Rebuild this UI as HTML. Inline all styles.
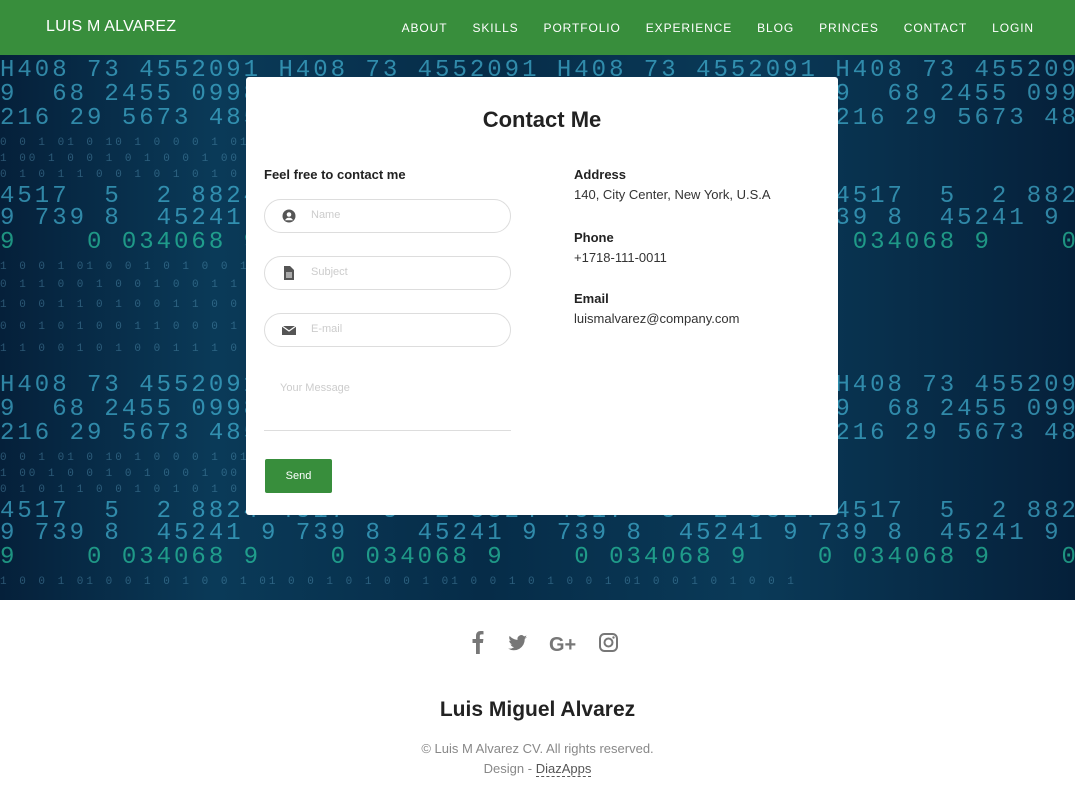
<!DOCTYPE html>
<html><head><meta charset="utf-8"><style>
*{margin:0;padding:0;box-sizing:border-box}
body{width:1075px;height:789px;overflow:hidden;font-family:"Liberation Sans",sans-serif;background:#fff;position:relative}
nav{position:absolute;top:0;left:0;width:1075px;height:55px;background:#388e3c;color:#fff}
nav .brand{position:absolute;left:46px;top:18px;font-size:16px;letter-spacing:.2px}
nav ul{position:absolute;right:41px;top:21px;list-style:none;display:flex;gap:25px;font-size:12px;letter-spacing:.9px}
.hero{position:absolute;top:55px;left:0;width:1075px;height:545px;overflow:hidden;background:linear-gradient(90deg,#05203a,#0a3a58 20%,#062c48 45%,#0a3a58 70%,#05203a);}
.tile{position:absolute;left:0;width:1075px;height:315px;font-family:"Liberation Mono",monospace;white-space:pre;color:#4cc8ea;}
.tile div{position:absolute;left:0}
.big{font-size:24px;opacity:.6;letter-spacing:3px}
.sm{font-size:11px;opacity:.35;color:#6fb6d8;letter-spacing:3px}
.g{color:#2fe0b0}
.card{position:absolute;left:246px;top:77px;width:592px;height:438px;background:#fff;border-radius:3px}
h1{position:absolute;top:30px;width:100%;text-align:center;font-size:22px;color:#222}
.lbl{position:absolute;left:18px;top:90px;font-size:13px;font-weight:bold;color:#222}
.inp{position:absolute;left:18px;width:247px;height:34px;border:1px solid #ddd;border-radius:17px;font-size:11px;color:#ccc;padding:9px 0 0 46px}
.inp svg{position:absolute;left:17px;top:9px}
.msg{position:absolute;left:18px;top:292px;width:247px;height:62px;border-bottom:1px solid #ddd;font-size:11px;color:#ccc;padding:13px 0 0 16px}
.btn{position:absolute;left:19px;top:382px;width:67px;height:34px;background:#388e3c;color:#fff;font-size:11px;text-align:center;line-height:34px;border-radius:2px}
.info{position:absolute;left:328px;font-size:13px;color:#333}
.info b{display:block;color:#222;margin-bottom:5px}
.foot{position:absolute;top:600px;width:1075px;text-align:center}
</style></head><body>
<nav><div class="brand">LUIS M ALVAREZ</div>
<ul><li>ABOUT</li><li>SKILLS</li><li>PORTFOLIO</li><li>EXPERIENCE</li><li>BLOG</li><li>PRINCES</li><li>CONTACT</li><li>LOGIN</li></ul></nav>
<div class="hero">
<div class="tile" style="top:0">
<div class="big" style="top:2px">H408 73 4552091 H408 73 4552091 H408 73 4552091 H408 73 4552091 H408 73 4552091</div>
<div class="big" style="top:26px">9  68 2455 0998 9  68 2455 0998 9  68 2455 0998 9  68 2455 0998 9  68 2455 0998</div>
<div class="big" style="top:50px">216 29 5673 485 216 29 5673 485 216 29 5673 485 216 29 5673 485 216 29 5673 485</div>
<div class="sm" style="top:82px">0 0 1 01 0 10 1 0 0 0 1 01 0 10 1 0 0 0 1 01 0 10 1 0 0 0 1 01 0 10 1 0 0 0 1 01 0 10</div>
<div class="sm" style="top:98px">1 00 1 0 0 1 0 1 0 0 1 00 1 0 0 1 0 1 0 0 1 00 1 0 0 1 0 1 0 0 1 00 1 0 0 1 0 1 0 0 1</div>
<div class="sm" style="top:114px">0 1 0 1 1 0 0 1 0 1 0 1 0 1 1 0 0 1 0 1 0 1 0 1 1 0 0 1 0 1 0 1 0 1 1 0 0 1 0 1 0 1 0 1</div>
<div class="big" style="top:128px">4517  5  2 8824 4517  5  2 8824 4517  5  2 8824 4517  5  2 8824 4517  5  2 8824</div>
<div class="big" style="top:150px">9 739 8  45241 9 739 8  45241 9 739 8  45241 9 739 8  45241 9 739 8  45241</div>
<div class="big g" style="top:174px">9    0 034068 9    0 034068 9    0 034068 9    0 034068 9    0 034068 9   </div>
<div class="sm" style="top:206px">1 0 0 1 01 0 0 1 0 1 0 0 1 01 0 0 1 0 1 0 0 1 01 0 0 1 0 1 0 0 1 01 0 0 1 0 1 0 0 1</div>
<div class="sm" style="top:224px">0 1 1 0 0 1 0 0 1 0 0 1 1 0 0 1 0 0 1 0 0 1 1 0 0 1 0 0 1 0 0 1 1 0 0 1 0 0 1 0 0 1 1</div>
<div class="sm" style="top:244px">1 0 0 1 1 0 1 0 0 1 1 0 0 1 1 0 1 0 0 1 1 0 0 1 1 0 1 0 0 1 1 0 0 1 1 0 1 0 0 1 1 0</div>
<div class="sm" style="top:266px">0 0 1 0 1 0 0 1 1 0 0 0 1 0 1 0 0 1 1 0 0 0 1 0 1 0 0 1 1 0 0 0 1 0 1 0 0 1 1 0 0 0 1</div>
<div class="sm" style="top:288px">1 1 0 0 1 0 1 0 0 1 1 1 0 0 1 0 1 0 0 1 1 1 0 0 1 0 1 0 0 1 1 1 0 0 1 0 1 0 0 1 1 1 0</div>
</div>
<div class="tile" style="top:315px">
<div class="big" style="top:2px">H408 73 4552091 H408 73 4552091 H408 73 4552091 H408 73 4552091 H408 73 4552091</div>
<div class="big" style="top:26px">9  68 2455 0998 9  68 2455 0998 9  68 2455 0998 9  68 2455 0998 9  68 2455 0998</div>
<div class="big" style="top:50px">216 29 5673 485 216 29 5673 485 216 29 5673 485 216 29 5673 485 216 29 5673 485</div>
<div class="sm" style="top:82px">0 0 1 01 0 10 1 0 0 0 1 01 0 10 1 0 0 0 1 01 0 10 1 0 0 0 1 01 0 10 1 0 0 0 1 01 0 10</div>
<div class="sm" style="top:98px">1 00 1 0 0 1 0 1 0 0 1 00 1 0 0 1 0 1 0 0 1 00 1 0 0 1 0 1 0 0 1 00 1 0 0 1 0 1 0 0 1</div>
<div class="sm" style="top:114px">0 1 0 1 1 0 0 1 0 1 0 1 0 1 1 0 0 1 0 1 0 1 0 1 1 0 0 1 0 1 0 1 0 1 1 0 0 1 0 1 0 1 0 1</div>
<div class="big" style="top:128px">4517  5  2 8824 4517  5  2 8824 4517  5  2 8824 4517  5  2 8824 4517  5  2 8824</div>
<div class="big" style="top:150px">9 739 8  45241 9 739 8  45241 9 739 8  45241 9 739 8  45241 9 739 8  45241</div>
<div class="big g" style="top:174px">9    0 034068 9    0 034068 9    0 034068 9    0 034068 9    0 034068 9   </div>
<div class="sm" style="top:206px">1 0 0 1 01 0 0 1 0 1 0 0 1 01 0 0 1 0 1 0 0 1 01 0 0 1 0 1 0 0 1 01 0 0 1 0 1 0 0 1</div>
</div>
</div>
<div class="card">
<h1>Contact Me</h1>
<div class="lbl">Feel free to contact me</div>
<div class="inp" style="top:122px"><svg width="14" height="14" viewBox="0 0 14 14"><circle cx="7" cy="7" r="6.5" fill="#555"/><circle cx="7" cy="5.5" r="2.3" fill="#fff"/><path d="M3 11.3c1-2 2.3-2.6 4-2.6s3 .6 4 2.6" fill="#fff"/></svg>Name</div>
<div class="inp" style="top:179px"><svg width="14" height="14" viewBox="0 0 14 14"><path d="M2 0h6l4 4v10H2z" fill="#555"/><path d="M4 7h6M4 9h6M4 11h6" stroke="#fff" stroke-width="1"/></svg>Subject</div>
<div class="inp" style="top:236px"><svg width="14" height="14" viewBox="0 0 14 14"><path d="M0 3h14v9H0z" fill="#555"/><path d="M0 3l7 5 7-5" stroke="#fff" stroke-width="1.2" fill="none"/></svg>E-mail</div>
<div class="msg">Your Message</div>
<div class="btn">Send</div>
<div class="info" style="top:90px"><b>Address</b>140, City Center, New York, U.S.A</div>
<div class="info" style="top:153px"><b>Phone</b>+1718-111-0011</div>
<div class="info" style="top:214px"><b>Email</b>luismalvarez@company.com</div>
</div>
<svg style="position:absolute;left:460px;top:628px" width="170" height="30" viewBox="0 0 170 30">
<g fill="#777"><path d="M18 26V15h-3.5v-4h3.5V8c0-3.4 2-5 4.8-5 1.3 0 2.4.1 2.7.1v3.3h-1.9c-1.5 0-1.8.7-1.8 1.8V11h3.6l-.5 4h-3.1v11z" transform="translate(-2,0)"/>
<path d="M67 9c-.7.3-1.4.5-2.2.6.8-.5 1.4-1.2 1.7-2.1-.7.4-1.6.8-2.4.9a3.8 3.8 0 0 0-6.5 3.5c-3.2-.2-6-1.7-7.9-4-1 1.8-.4 4 1.2 5.1-.6 0-1.2-.2-1.7-.5 0 1.8 1.3 3.4 3 3.8-.6.2-1.2.2-1.7.1.5 1.5 1.9 2.6 3.6 2.7A7.7 7.7 0 0 1 48 20.5a10.8 10.8 0 0 0 16.7-9.6c.9-.5 1.7-1.2 2.3-1.9z"/></g>
<text x="89" y="23" font-family="Liberation Sans" font-weight="bold" font-size="20" fill="#777">G+</text>
<g fill="none" stroke="#777" stroke-width="2"><rect x="140" y="6" width="17" height="17" rx="4.5"/><circle cx="148.5" cy="14.5" r="4"/></g><circle cx="153.5" cy="9.5" r="1.2" fill="#777"/>
</svg>
<div class="foot">
<div style="margin-top:98px;font-size:21px;font-weight:bold;color:#222">Luis Miguel Alvarez</div>
<div style="margin-top:17px;font-size:13px;color:#888;line-height:20px">© Luis M Alvarez CV. All rights reserved.<br>Design - <span style="color:#555;border-bottom:1px dashed #555">DiazApps</span></div>
</div>
</body></html>
